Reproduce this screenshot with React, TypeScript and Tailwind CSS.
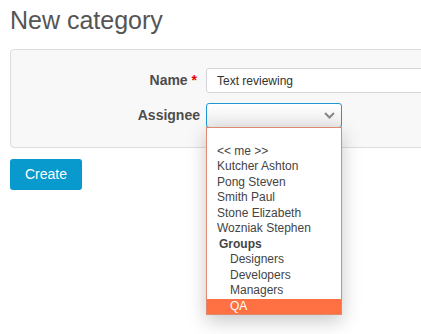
const users = ["Kutcher Ashton", "Pong Steven", "Smith Paul", "Stone Elizabeth", "Wozniak Stephen"];
const groups = ["Designers", "Developers", "Managers", "QA"];

export default function App() {
  return (
    <div className="h-[334px] w-[421px] overflow-hidden bg-white pl-[10px] font-['Liberation_Sans',Arial,sans-serif] text-[#555]">
      <h1 className="pt-[4px] text-[25px] leading-[32px] text-[#555]">New category</h1>

      {/* Form panel */}
      <div className="mt-[13px] w-[640px] rounded-[4px] border border-[#dddddd] bg-[#f8f8f8] pt-[18px] pb-[19px]">
        <div className="flex items-center">
          <label className="w-[190px] pr-[4px] text-right text-[14px] font-bold text-[#4d4d4d]">
            Name <span className="text-[#e00]">*</span>
          </label>
          <div className="ml-[5px] flex h-[25px] w-[400px] items-center rounded-[3px] border border-[#d6d6d6] bg-white pl-[10px] text-[12px] text-[#333]">
            Text reviewing
          </div>
        </div>

        <div className="mt-[10px] flex items-center">
          <label className="w-[190px] pr-[1px] text-right text-[14px] font-bold text-[#4d4d4d]">Assignee</label>
          <div className="relative ml-[5px]">
            <div className="flex h-[25px] w-[136px] items-center justify-end rounded-[3px] border border-[#1f97d1] bg-gradient-to-b from-white to-[#ececec] pr-[6px]">
              <svg width="11" height="7" viewBox="0 0 11 7" fill="none">
                <polyline points="1,1 5.5,5.5 10,1" stroke="#888" strokeWidth="2" />
              </svg>
            </div>

            {/* Open dropdown list */}
            <ul className="absolute left-0 top-[24px] z-10 w-[136px] border border-[#df8a70] bg-white text-[12px] leading-[15.5px] text-[#444] shadow-[0_6px_18px_rgba(0,0,0,0.22)]">
              <li className="h-[15.5px]" />
              <li className="pl-[10px]">&lt;&lt; me &gt;&gt;</li>
              {users.map((u) => (
                <li key={u} className="pl-[10px]">
                  {u}
                </li>
              ))}
              <li className="pl-[12px] font-bold text-[#444]">Groups</li>
              {groups.map((g) => (
                <li
                  key={g}
                  className={g === "QA" ? "bg-[#ff7043] pl-[23px] text-white" : "pl-[23px]"}
                >
                  {g}
                </li>
              ))}
            </ul>
          </div>
        </div>
      </div>

      <button className="mt-[11px] h-[31px] w-[72px] rounded-[3px] bg-[#0899cd] text-[14px] text-white">
        Create
      </button>
    </div>
  );
}
